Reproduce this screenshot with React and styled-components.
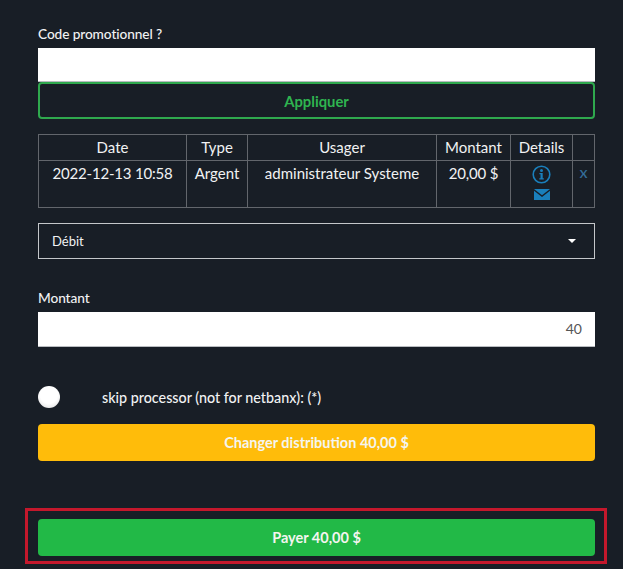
import React from "react";
import styled, { createGlobalStyle } from "styled-components";

const GlobalStyle = createGlobalStyle`
  html, body {
    margin: 0;
    padding: 0;
    background: #181e26;
  }
  * {
    box-sizing: border-box;
  }
`;

const Page = styled.div`
  width: 623px;
  height: 569px;
  overflow: hidden;
  padding: 26px 28px 0 38px;
  background: #181e26;
  color: #f1f2f3;
  font-family: Lato, "Liberation Sans", sans-serif;
  font-size: 14px;
`;

const Label = styled.div`
  height: 22px;
  font-size: 13.7px;
  line-height: 16px;
  font-weight: 500;
  letter-spacing: -0.1px;
`;

const TextBox = styled.div`
  height: ${({ $height }) => $height}px;
  padding: 0 13px;
  background: #fff;
  border-bottom: 1px solid #b9bcc0;
  color: #555;
  font-size: 14px;
  line-height: 34px;
  text-align: right;
`;

const OutlineButton = styled.button`
  display: block;
  width: 100%;
  height: 37px;
  margin-bottom: 15px;
  background: transparent;
  border: 2px solid #2fa94e;
  border-radius: 4px;
  color: #2fb450;
  font-family: inherit;
  font-size: 14.8px;
  font-weight: 700;
`;

const Table = styled.table`
  width: 556px;
  height: 74px;
  border-collapse: collapse;
  table-layout: fixed;
  margin-bottom: 15px;
`;

const HeadCell = styled.th`
  height: 26px;
  padding: 0 0 2px;
  border: 1px solid #62666c;
  font-size: 15px;
  font-weight: 400;
  text-align: center;
  vertical-align: middle;
`;

const Cell = styled.td`
  padding: 3px 0 0;
  border: 1px solid #62666c;
  font-size: 15px;
  line-height: 18px;
  letter-spacing: ${({ $tight }) => ($tight ? "-0.2px" : "0")};
  text-align: center;
  vertical-align: top;
`;

const DetailIcons = styled.div`
  display: flex;
  flex-direction: column;
  align-items: center;
  gap: 5px;
  padding-top: 1px;
  color: #1a7fbb;
`;

const RemoveLink = styled.span`
  position: relative;
  top: -1px;
  color: #336d99;
  font-size: 16px;
  font-weight: 500;
`;

const SelectBox = styled.div`
  display: flex;
  align-items: center;
  justify-content: space-between;
  height: 36px;
  padding: 0 18px 0 13px;
  margin-bottom: 31px;
  border: 1px solid #c4c7ca;
  font-size: 13px;
`;

const Caret = styled.span`
  width: 0;
  height: 0;
  border-left: 4px solid transparent;
  border-right: 4px solid transparent;
  border-top: 4px solid #fff;
`;

const SwitchRow = styled.div`
  display: flex;
  align-items: center;
  gap: 42px;
  height: 24px;
  margin: 38px 0 15px;
  font-size: 14.3px;
  font-weight: 500;
`;

const Knob = styled.span`
  width: 22px;
  height: 22px;
  border-radius: 50%;
  background: radial-gradient(circle at 50% 40%, #fff 50%, #d8d8d8 100%);
`;

const SolidButton = styled.button`
  display: block;
  width: 100%;
  height: 37px;
  background: ${({ $color }) => $color};
  border: 0;
  border-radius: 4px;
  color: #f4f5ef;
  font-family: inherit;
  font-size: 14.5px;
  font-weight: 700;
`;

const PayFrame = styled.div`
  width: 582px;
  height: 56px;
  margin: 47px 0 0 -13px;
  padding: 8px 9px 8px 10px;
  border: 3px solid #c4182c;
`;

const InfoIcon = () => (
  <svg width="19" height="19" viewBox="0 0 19 19" fill="none">
    <circle cx="9.5" cy="9.5" r="8.3" stroke="currentColor" strokeWidth="1.6" />
    <circle cx="9.5" cy="5.4" r="1.5" fill="currentColor" />
    <path d="M7.4 8h3.3v5.2h1.1v1.3H7.3v-1.3h1.2V9.3H7.4z" fill="currentColor" />
  </svg>
);

const MailIcon = () => (
  <svg width="16" height="11" viewBox="0 0 16 11">
    <path d="M0 0h16L8 6.2z" fill="currentColor" />
    <path d="M0 1.8 8 8l8-6.2V11H0z" fill="currentColor" />
  </svg>
);

const columns = [148, 61, 189, 74, 62, 22];

const App = () => {
  return (
    <Page>
      <GlobalStyle />
      <Label>Code promotionnel ?</Label>
      <TextBox $height={34} />
      <OutlineButton>Appliquer</OutlineButton>
      <Table>
        <colgroup>
          {columns.map((width, i) => (
            <col key={i} style={{ width }} />
          ))}
        </colgroup>
        <thead>
          <tr>
            <HeadCell>Date</HeadCell>
            <HeadCell>Type</HeadCell>
            <HeadCell>Usager</HeadCell>
            <HeadCell>Montant</HeadCell>
            <HeadCell>Details</HeadCell>
            <HeadCell />
          </tr>
        </thead>
        <tbody>
          <tr>
            <Cell $tight>2022-12-13 10:58</Cell>
            <Cell>Argent</Cell>
            <Cell>administrateur Systeme</Cell>
            <Cell $tight>20,00 $</Cell>
            <Cell>
              <DetailIcons>
                <InfoIcon />
                <MailIcon />
              </DetailIcons>
            </Cell>
            <Cell>
              <RemoveLink>x</RemoveLink>
            </Cell>
          </tr>
        </tbody>
      </Table>
      <SelectBox>
        Débit
        <Caret />
      </SelectBox>
      <Label>Montant</Label>
      <TextBox $height={35}>40</TextBox>
      <SwitchRow>
        <Knob />
        skip processor (not for netbanx): (*)
      </SwitchRow>
      <SolidButton $color="#ffbc0a">Changer distribution 40,00 $</SolidButton>
      <PayFrame>
        <SolidButton $color="#22b947">Payer 40,00 $</SolidButton>
      </PayFrame>
    </Page>
  );
};

export default App;
